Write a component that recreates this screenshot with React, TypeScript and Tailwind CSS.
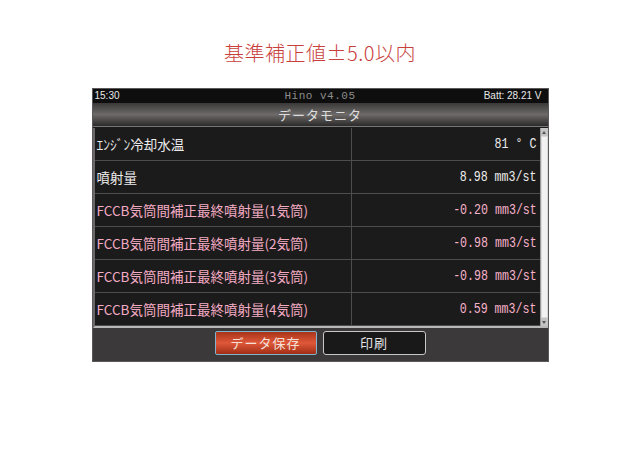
const rows = [
  { label: 'ｴﾝｼﾞﾝ冷却水温', value: '81 ° C', pink: false },
  { label: '噴射量', value: '8.98 mm3/st', pink: false },
  { label: 'FCCB気筒間補正最終噴射量(1気筒)', value: '-0.20 mm3/st', pink: true },
  { label: 'FCCB気筒間補正最終噴射量(2気筒)', value: '-0.98 mm3/st', pink: true },
  { label: 'FCCB気筒間補正最終噴射量(3気筒)', value: '-0.98 mm3/st', pink: true },
  { label: 'FCCB気筒間補正最終噴射量(4気筒)', value: '0.59 mm3/st', pink: true },
];

const jp = { fontFamily: '"Noto Sans CJK JP", "Noto Sans", sans-serif' };
const mono = { fontFamily: '"Liberation Mono", "DejaVu Sans Mono", monospace' };

export default function App() {
  return (
    <div className="w-[640px] h-[452px] bg-white flex flex-col items-center">
      <h1
        className="mt-[40px] text-[20px] leading-[26px] font-light text-[#c8403c] tracking-[0.5px]"
        style={jp}
      >
        基準補正値±5.0以内
      </h1>

      <div className="mt-[22px] w-[457px] h-[274px] bg-[#1c1b1b] border border-[#5a5858] flex flex-col">
        {/* status bar */}
        <div className="h-[14px] bg-[#0e0e0e] flex items-center justify-between px-[2px] text-[10px] leading-none">
          <span className="text-[#e8e8e8] w-[90px]" style={{ fontFamily: '"Liberation Sans", sans-serif' }}>15:30</span>
          <span className="text-[#8c8c8c] tracking-[0.5px] text-[11px]" style={mono}>Hino v4.05</span>
          <span className="text-[#e8e8e8] w-[90px] text-right pr-[4px]" style={{ fontFamily: '"Liberation Sans", sans-serif' }}>Batt: 28.21 V</span>
        </div>

        {/* title */}
        <div className="h-[24px] bg-gradient-to-b from-[#3a3838] via-[#6e6a6a] to-[#2c2a2a] flex items-center justify-center border-b border-[#777]">
          <span className="text-[13px] text-[#dcdcdc] tracking-[1px]" style={jp}>データモニタ</span>
        </div>

        {/* table */}
        <div className="flex h-[200px] border-l-2 border-[#6a6868] border-b-2 border-b-[#b8b8b8] mt-[1px]">
          <div className="flex-1 flex flex-col">
            {rows.map((r, i) => (
              <div key={i} className="h-[33px] flex border-b border-[#4e4c4c]">
                <div
                  className={`w-[257px] flex items-center pl-[2px] text-[13.5px] border-r border-[#4e4c4c] ${r.pink ? 'text-[#f4acc4]' : 'text-[#ececec]'}`}
                  style={jp}
                >
                  {r.label}
                </div>
                <div className="flex-1 flex items-center justify-end pr-[3px]">
                  <span
                    className={`inline-block text-[14px] scale-x-[0.83] origin-right ${r.pink ? 'text-[#f6b2ca]' : 'text-[#ececec]'}`}
                    style={mono}
                  >
                    {r.value}
                  </span>
                </div>
              </div>
            ))}
          </div>
          {/* scrollbar */}
          <div className="w-[8px] bg-[#d8d8d8] flex flex-col justify-between border-l border-[#999]">
            <div className="h-[8px] bg-[#c4c4c4] flex items-center justify-center">
              <div className="w-0 h-0 border-l-[2px] border-r-[2px] border-b-[3px] border-l-transparent border-r-transparent border-b-[#555]" />
            </div>
            <div className="flex-1 bg-[#f2f2f2] mx-[1px] my-[1px]" />
            <div className="h-[8px] bg-[#c4c4c4] flex items-center justify-center">
              <div className="w-0 h-0 border-l-[2px] border-r-[2px] border-t-[3px] border-l-transparent border-r-transparent border-t-[#555]" />
            </div>
          </div>
        </div>

        {/* buttons */}
        <div className="flex-1 bg-[#3b3939] flex items-start justify-center gap-[6px] pt-[3px]">
          <button
            className="w-[102px] h-[24px] rounded-[2px] border border-[#7fb4cc] bg-gradient-to-b from-[#a83418] via-[#e0583a] to-[#a02e14] text-[13px] text-[#f4e0d8] tracking-[1px]"
            style={jp}
          >
            データ保存
          </button>
          <button
            className="w-[103px] h-[24px] rounded-[3px] border border-[#c8c8c8] bg-[#1a1919] text-[13px] text-[#e4e4e4] tracking-[1px]"
            style={jp}
          >
            印刷
          </button>
        </div>
      </div>
    </div>
  );
}
